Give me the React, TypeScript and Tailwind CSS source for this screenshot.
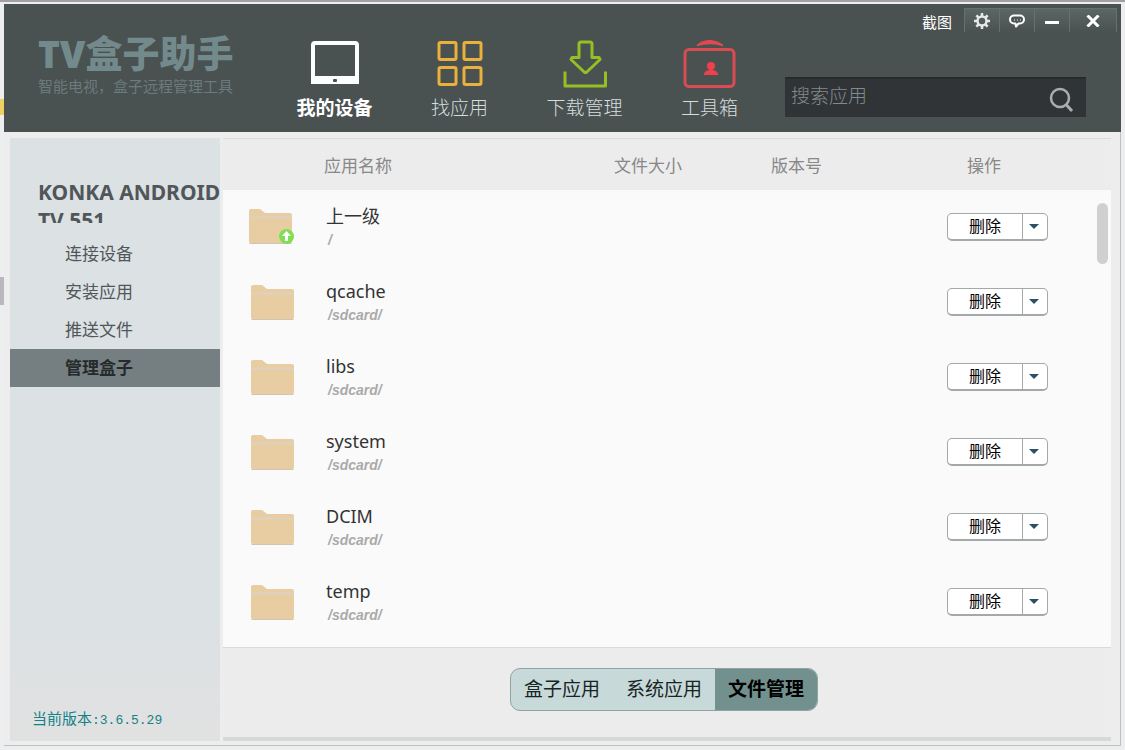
// TV box assistant - file manager window
import { useState } from 'react';
import type { ReactNode } from 'react';
import clsx from 'clsx';

interface FileEntry {
  name: string;
  path: string;
  parent?: boolean;
}

const FILES: FileEntry[] = [
  { name: '上一级', path: '/', parent: true },
  { name: 'qcache', path: '/sdcard/' },
  { name: 'libs', path: '/sdcard/' },
  { name: 'system', path: '/sdcard/' },
  { name: 'DCIM', path: '/sdcard/' },
  { name: 'temp', path: '/sdcard/' },
];

const SIDE_ITEMS = ['连接设备', '安装应用', '推送文件', '管理盒子'];
const TABS = ['盒子应用', '系统应用', '文件管理'];

function DeviceIcon() {
  return (
    <svg width="50" height="48" viewBox="0 0 50 48">
      <path
        fillRule="evenodd"
        fill="#fbffff"
        d="M5 1h40a4 4 0 0 1 4 4v39H1V5a4 4 0 0 1 4-4zM5 5v31h40V5z"
      />
      <rect x="23" y="39" width="4" height="3" rx="1" fill="#49504f" />
    </svg>
  );
}

function AppsIcon() {
  return (
    <svg width="50" height="48" viewBox="0 0 50 48" fill="none" stroke="#eab13c" strokeWidth="3">
      <rect x="4" y="2.5" width="17" height="17" rx="1.5" />
      <rect x="29" y="2.5" width="17" height="17" rx="1.5" />
      <rect x="4" y="27.5" width="17" height="17" rx="1.5" />
      <rect x="29" y="27.5" width="17" height="17" rx="1.5" />
    </svg>
  );
}

function DownloadIcon() {
  return (
    <svg
      width="50"
      height="48"
      viewBox="0 0 50 48"
      fill="none"
      stroke="#96bf22"
      strokeWidth="3"
      strokeLinejoin="round"
    >
      <path d="M21 2h9q2 0 2 2v13.500h7l1 2-13.200 12.500q-1.300 1-2.600 0L11 19.500l1-2h7V4q0-2 2-2z" />
      <path d="M5 31.500v14.500h40.500V31.500" />
    </svg>
  );
}

function ToolboxIcon() {
  return (
    <svg width="54" height="48" viewBox="0 0 54 48">
      <path d="M14 5.500Q26 -4 40 5.500Q27 1.500 14 5.500z" fill="#e2484f" stroke="#e2484f" strokeWidth="1.500" />
      <rect x="2" y="9.500" width="49" height="37" rx="4" fill="none" stroke="#d84c52" strokeWidth="3" />
      <circle cx="28" cy="26" r="4" fill="#ee4149" />
      <path d="M20.500 35q1-4.500 6-5h3q5 .500 6 5z" fill="#ee4149" />
    </svg>
  );
}

function FolderIcon({ up }: { up?: boolean }) {
  return (
    <svg width="48" height="38" viewBox="0 0 48 38">
      <path d="M2 3q0-2 2-2h9l5 4h25q2 0 2 2v27q0 1-2 1H4q-2 0-2-1z" fill="#e9cda2" />
      <path d="M2 9.500h43" stroke="#ddd2bf" strokeWidth="2" />
      <path d="M2.500 35.500h42" stroke="#cfc5b2" />
      {up && (
        <>
          <circle cx="39.500" cy="28.500" r="7.500" fill="#83df52" />
          <path d="M39.500 23l4.500 5h-3v5h-3v-5h-3z" fill="#fff" />
        </>
      )}
    </svg>
  );
}

function GearIcon() {
  return (
    <svg width="18" height="18" viewBox="0 0 18 18" stroke="#e4e9e8" fill="none">
      <circle cx="9" cy="9" r="4.500" strokeWidth="2.500" />
      <path
        d="M9 1v3M9 14v3M1 9h3M14 9h3M3.300 3.300l2.200 2.200M12.500 12.500l2.200 2.200M3.300 14.700l2.200-2.200M12.500 5.500l2.200-2.200"
        strokeWidth="2.500"
      />
    </svg>
  );
}

function ChatIcon() {
  return (
    <svg width="16" height="16" viewBox="0 0 16 16">
      <path
        d="M5 2.500h6a3.500 3.500 0 0 1 0 8H9.500L7 13.500l-.500-3H5a3.500 3.500 0 0 1 0-8z"
        fill="#4b5656"
        stroke="#fff"
        strokeWidth="2"
        strokeLinejoin="round"
      />
      <path d="M5 7h1M8 7h1M11 7h1" stroke="#fff" strokeWidth="1" />
    </svg>
  );
}

const NAV = [
  { label: '我的设备', icon: <DeviceIcon /> },
  { label: '找应用', icon: <AppsIcon /> },
  { label: '下载管理', icon: <DownloadIcon /> },
  { label: '工具箱', icon: <ToolboxIcon /> },
];

function WindowButton({ label, wide, children }: { label: string; wide?: boolean; children: ReactNode }) {
  return (
    <button
      aria-label={label}
      className={clsx(
        'flex h-6 shrink-0 items-center justify-center border-t border-l border-[#66716f] bg-linear-to-b from-[#5b6765] to-[#495251]',
        wide ? 'w-12 border-r' : 'w-[35px]',
      )}
    >
      {children}
    </button>
  );
}

function Header() {
  return (
    <header className="flex h-32 shrink-0 bg-[#495151]">
      <div className="w-[268px] shrink-0 pt-7 pl-[34px] text-[#738a8d]">
        <h1 className="text-[37px] leading-[44px] font-black whitespace-nowrap">TV盒子助手</h1>
        <p className="text-[15px] leading-5 whitespace-nowrap text-[#6b7b7d]">智能电视，盒子远程管理工具</p>
      </div>

      <nav className="flex shrink-0">
        {NAV.map((item, i) => (
          <a
            key={item.label}
            href="#"
            className={clsx(
              'flex w-[125px] flex-col items-center gap-1.5 pt-9 text-[19px] leading-7',
              i === 0 ? 'font-bold text-white' : 'font-light text-[#d5dddd]',
            )}
          >
            {item.icon}
            {item.label}
          </a>
        ))}
      </nav>

      <div className="flex min-w-0 flex-1 flex-col">
        <div className="flex justify-end pt-1 pr-1">
          <button className="mr-3 text-[15px] leading-7 text-white">截图</button>
          <WindowButton label="设置">
            <GearIcon />
          </WindowButton>
          <WindowButton label="反馈">
            <ChatIcon />
          </WindowButton>
          <WindowButton label="最小化">
            <span className="mt-1 h-[3px] w-[14px] bg-white" />
          </WindowButton>
          <WindowButton label="关闭" wide>
            <svg width="14" height="12" viewBox="0 0 14 12" stroke="#fff" strokeWidth="3">
              <path d="M1.500 .500l11 11M12.500 .500l-11 11" />
            </svg>
          </WindowButton>
        </div>
        <form className="mt-[41px] mr-[35px] ml-[13px] flex h-10 items-center border-t-2 border-[#262b2d] bg-[#303437]">
          <input
            type="text"
            aria-label="搜索应用"
            placeholder="搜索应用"
            className="h-full min-w-0 flex-1 bg-transparent px-1.5 pb-1 text-[19px] font-light text-gray-200 outline-none placeholder:text-[#858a8d]"
          />
          <button type="button" aria-label="搜索" className="pt-1 pr-3">
            <svg width="25" height="26" viewBox="0 0 25 26" fill="none" stroke="#a9adaf">
              <circle cx="11" cy="11" r="9" strokeWidth="2.500" />
              <path d="M17.500 18l5.500 6" strokeWidth="3" />
            </svg>
          </button>
        </form>
      </div>
    </header>
  );
}

function Sidebar() {
  const [active, setActive] = useState('管理盒子');

  return (
    <aside className="flex w-[210px] shrink-0 flex-col bg-linear-to-b from-[#dce1e4] from-80% to-[#e1e1e1]">
      <h2 className="mt-10 ml-7 h-[45px] overflow-hidden font-[Noto_Sans] text-[21px] leading-7 font-bold text-[#50565a]">
        <span className="block whitespace-nowrap">KONKA ANDROID</span>
        <span className="block">TV 551</span>
      </h2>
      <div className="mt-3 flex flex-col">
        {SIDE_ITEMS.map((item) => (
          <button
            key={item}
            onClick={() => setActive(item)}
            className={clsx(
              'h-[38px] pl-[55px] text-left text-[17px]',
              item === active ? 'bg-[#757e80] font-bold text-[#252b2d]' : 'text-[#50575a]',
            )}
          >
            {item}
          </button>
        ))}
      </div>
      <p className="mt-auto mb-2.5 pl-[22px] text-[15px] leading-5 text-[#148287]">
        当前版本<span className="font-[Liberation_Mono] text-[13px]">:3.6.5.29</span>
      </p>
    </aside>
  );
}

function FileRow({ file }: { file: FileEntry }) {
  return (
    <tr className="h-[75px]">
      <td className={clsx('align-middle', file.parent ? 'pb-0.5 pl-6' : 'pl-[26px]')}>
        <FolderIcon up={file.parent} />
      </td>
      <td className="pl-0.5 align-middle">
        <div className="text-[18px] leading-6 text-[#333]">{file.name}</div>
        <div className="pl-0.5 font-[Liberation_Sans] text-[14px] leading-6 font-bold text-[#aaa] italic">
          {file.path}
        </div>
      </td>
      <td />
      <td />
      <td className="pb-0.5 align-middle">
        <div className="flex h-7 w-[101px] rounded-[5px] border border-b-2 border-[#a3a9a9] bg-white text-black">
          <button className="flex-1 text-[16px] leading-6">删除</button>
          <button
            aria-label="更多操作"
            className="flex w-[25px] items-center justify-center border-l border-[#a3a9a9] pr-0.5"
          >
            <svg width="10" height="5" viewBox="0 0 10 5">
              <path d="M0 0h10L5 5z" fill="#285069" />
            </svg>
          </button>
        </div>
      </td>
    </tr>
  );
}

function FileManager() {
  const [tab, setTab] = useState('文件管理');

  return (
    <main className="flex min-w-0 flex-1 flex-col">
      <div className="relative flex-1 border-t border-[#dadada] bg-[#fafafa]">
        <table className="w-full table-fixed border-collapse">
          <colgroup>
            <col className="w-[101px]" />
            <col />
            <col className="w-[157px]" />
            <col className="w-[176px]" />
            <col className="w-[164px]" />
          </colgroup>
          <thead>
            <tr className="h-[51px] bg-[#ececec] text-left text-[17px] text-[#888]">
              <td />
              <th className="pt-0.5 font-normal">应用名称</th>
              <th className="pt-0.5 font-normal">文件大小</th>
              <th className="pt-0.5 font-normal">版本号</th>
              <th className="pt-0.5 pl-5 font-normal">操作</th>
            </tr>
          </thead>
          <tbody>
            {FILES.map((file) => (
              <FileRow key={file.name} file={file} />
            ))}
          </tbody>
        </table>
        {/* Scroll thumb */}
        <div className="absolute top-16 right-[3px] h-[61px] w-[11px] rounded-full bg-[#d0d0d0]" />
      </div>

      <div className="flex h-[94px] shrink-0 justify-center border-t border-b-4 border-t-[#dadada] border-b-[#d8d8d8] bg-[#ececec] pt-5 pr-1.5">
        <div className="flex h-[43px] overflow-hidden rounded-[10px] border border-[#8fa3a1] bg-[#c7d9d8] text-[19px] text-[#172426]">
          {TABS.map((item) => (
            <button
              key={item}
              onClick={() => setTab(item)}
              className={clsx('w-[102px]', item === tab && 'bg-[#72918e] font-bold text-black')}
            >
              {item}
            </button>
          ))}
        </div>
      </div>
    </main>
  );
}

export default function App() {
  return (
    <div className="flex min-h-screen border-t-2 border-[#a3a0a5] bg-[#eceef0] font-[Noto_Sans,Noto_Sans_CJK_SC,sans-serif]">
      {/* Desktop showing at the left edge */}
      <div className="flex w-1 shrink-0 flex-col">
        <div className="mt-[97px] h-4 bg-[#efcf61]" />
        <div className="mt-[162px] h-7 bg-[#b9b8be]" />
      </div>
      <div className="mt-0.5 mr-1 mb-1 flex min-w-0 flex-1 flex-col border-b border-[#bfc1c1] bg-[#ededed]">
        <Header />
        <div className="flex flex-1 gap-[3px] border-r border-[#bfc1c1] pt-1.5 pr-[9px] pb-1 pl-1.5">
          <Sidebar />
          <FileManager />
        </div>
      </div>
    </div>
  );
}
